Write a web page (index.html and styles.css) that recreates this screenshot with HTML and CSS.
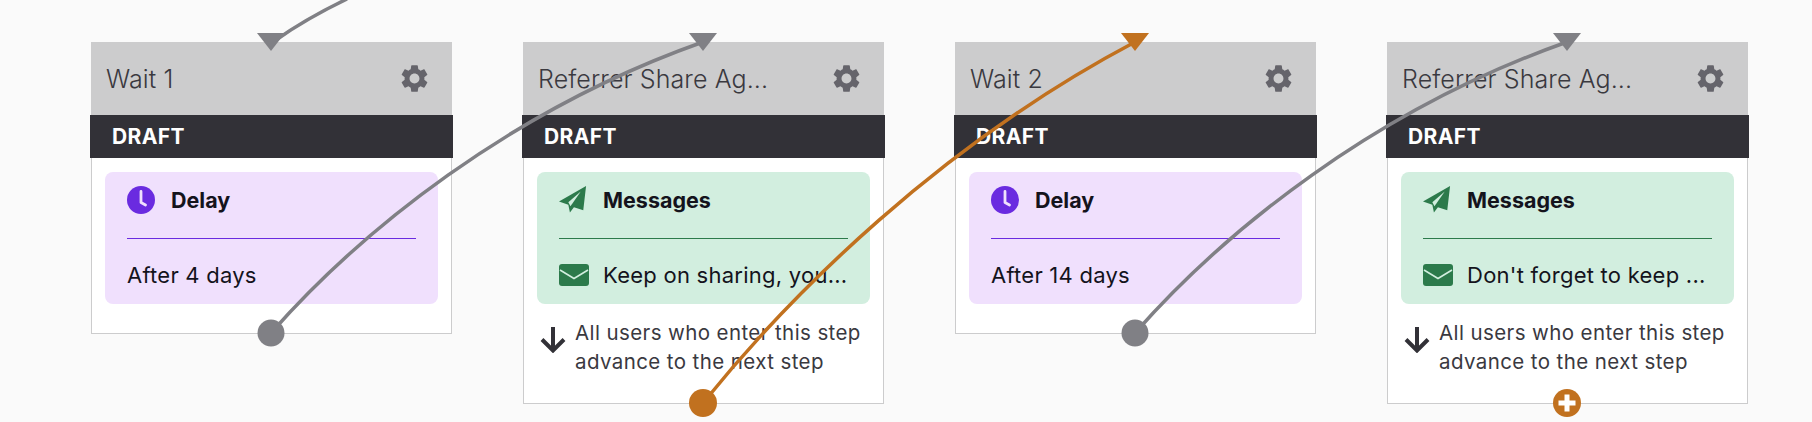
FILE: index.html
```html
<!DOCTYPE html>
<html lang="en">
<head>
  <meta charset="UTF-8">
  <meta name="viewport" content="width=device-width, initial-scale=1.0">
  <title>Journey Steps</title>
  <link rel="stylesheet" href="styles.css">
</head>
<body>

  <svg width="0" height="0" class="defs">
    <defs>
      <symbol id="gear" viewBox="0 0 24 24">
        <path d="M19.14 12.94c.04-.3.06-.61.06-.94 0-.32-.02-.64-.07-.94l2.03-1.58c.18-.14.23-.41.12-.61l-1.92-3.32c-.12-.22-.37-.29-.59-.22l-2.39.96c-.5-.38-1.03-.7-1.62-.94l-.36-2.54c-.04-.24-.24-.41-.48-.41h-3.84c-.24 0-.43.17-.47.41l-.36 2.54c-.59.24-1.13.57-1.62.94l-2.39-.96c-.22-.08-.47 0-.59.22L2.74 8.87c-.12.21-.08.47.12.61l2.03 1.58c-.05.3-.09.63-.09.94s.02.64.07.94l-2.03 1.58c-.18.14-.23.41-.12.61l1.92 3.32c.12.22.37.29.59.22l2.39-.96c.5.38 1.03.7 1.62.94l.36 2.54c.05.24.24.41.48.41h3.84c.24 0 .44-.17.47-.41l.36-2.54c.59-.24 1.13-.56 1.62-.94l2.39.96c.22.08.47 0 .59-.22l1.92-3.32c.12-.22.07-.47-.12-.61l-2.01-1.58zM12 15.6c-1.98 0-3.6-1.62-3.6-3.6s1.62-3.6 3.6-3.6 3.6 1.62 3.6 3.6-1.62 3.6-3.6 3.6z"/>
      </symbol>
      <symbol id="clock" viewBox="0 0 28 28">
        <circle cx="14" cy="14" r="14" fill="#6a2be0"/>
        <path d="M14 5.500V16.500L18.500 19" fill="none" stroke="#f0e0fd" stroke-width="2.800" stroke-linecap="round" stroke-linejoin="round"/>
      </symbol>
      <symbol id="plane" viewBox="0 0 30 30">
        <path d="M29 0 0 16.700 10 20 11.700 28.300 16 22.700 26 26Z" fill="#2c7a4b"/>
        <path d="M10 17.300 23.300 6 12.300 21.700Z" fill="#d2eedf"/>
      </symbol>
      <symbol id="mail" viewBox="0 0 30 22">
        <rect width="30" height="22" rx="3" fill="#2c7a4b"/>
        <path d="M1 6 L15 14.500 L29 6" fill="none" stroke="#d2eedf" stroke-width="1.600"/>
      </symbol>
      <symbol id="arrow" viewBox="0 0 26 26">
        <path d="M13 0v23M2 12.500 13 23.500 24 12.500" fill="none" stroke="#323137" stroke-width="4"/>
      </symbol>
    </defs>
  </svg>

  <div class="canvas">

    <div class="step">
      <div class="step-head">
        <span class="step-name">Wait 1</span>
        <svg class="gear"><use href="#gear"/></svg>
      </div>
      <div class="step-status">DRAFT</div>
      <div class="step-body">
        <div class="action action-delay">
          <div class="action-head">
            <svg class="icon"><use href="#clock"/></svg>
            <b>Delay</b>
          </div>
          <div class="action-row">
            <span>After 4 days</span>
          </div>
        </div>
      </div>
    </div>

    <div class="step">
      <div class="step-head">
        <span class="step-name">Referrer Share Ag...</span>
        <svg class="gear"><use href="#gear"/></svg>
      </div>
      <div class="step-status">DRAFT</div>
      <div class="step-body">
        <div class="action action-msg">
          <div class="action-head">
            <svg class="icon"><use href="#plane"/></svg>
            <b>Messages</b>
          </div>
          <div class="action-row">
            <svg class="icon icon-mail"><use href="#mail"/></svg>
            <span>Keep on sharing, you...</span>
          </div>
        </div>
        <div class="advance">
          <svg class="advance-icon"><use href="#arrow"/></svg>
          <span>All users who enter this step advance to the next step</span>
        </div>
      </div>
    </div>

    <div class="step">
      <div class="step-head">
        <span class="step-name">Wait 2</span>
        <svg class="gear"><use href="#gear"/></svg>
      </div>
      <div class="step-status">DRAFT</div>
      <div class="step-body">
        <div class="action action-delay">
          <div class="action-head">
            <svg class="icon"><use href="#clock"/></svg>
            <b>Delay</b>
          </div>
          <div class="action-row">
            <span>After 14 days</span>
          </div>
        </div>
      </div>
    </div>

    <div class="step">
      <div class="step-head">
        <span class="step-name">Referrer Share Ag...</span>
        <svg class="gear"><use href="#gear"/></svg>
      </div>
      <div class="step-status">DRAFT</div>
      <div class="step-body">
        <div class="action action-msg">
          <div class="action-head">
            <svg class="icon"><use href="#plane"/></svg>
            <b>Messages</b>
          </div>
          <div class="action-row">
            <svg class="icon icon-mail"><use href="#mail"/></svg>
            <span>Don't forget to keep ...</span>
          </div>
        </div>
        <div class="advance">
          <svg class="advance-icon"><use href="#arrow"/></svg>
          <span>All users who enter this step advance to the next step</span>
        </div>
      </div>
    </div>

    <!-- conectores entre pasos, van encima de las tarjetas -->
    <svg class="links" width="1812" height="422" viewBox="0 0 1812 422">
      <g class="link-grey">
        <path class="wire" d="M347 -1C322 11 300 23 276 40"/>
        <path class="tip" d="M257 33H285L271 51Z"/>
        <path class="wire" d="M271 333C360 232 510 110 703 42"/>
        <path class="tip" d="M689 33H717L703 51Z"/>
        <circle cx="271" cy="333" r="13.500"/>
        <path class="wire" d="M1135 333C1224 232 1374 110 1567 42"/>
        <path class="tip" d="M1553 33H1581L1567 51Z"/>
        <circle cx="1135" cy="333" r="13.500"/>
      </g>
      <g class="link-orange">
        <path class="wire" d="M703 403C790 295 940 145 1135 42"/>
        <path class="tip" d="M1121 33H1149L1135 51Z"/>
        <circle cx="703" cy="403" r="14"/>
        <circle cx="1567" cy="403" r="14"/>
        <path class="plus" d="M1567 394.500V411.500M1558.500 403H1575.500"/>
      </g>
    </svg>

  </div>

</body>
</html>
```

FILE: styles.css
```css
html, body {
  margin: 0;
  padding: 0;
  height: 100%;
  overflow: hidden;
}

body {
  background-color: #fafafa;
  font-family: 'Inter', sans-serif;
  color: #14131c;
}

.defs {
  position: absolute;
}

.canvas {
  position: relative;
  display: flex;
  align-items: flex-start;
  gap: 71px;
  padding: 42px 0 0 91px;
  height: 100%;
  box-sizing: border-box;
}

.step {
  width: 361px;
  flex: none;
}

.step-head {
  height: 73px;
  background-color: #cccccd;
  display: flex;
  align-items: center;
  justify-content: space-between;
  padding: 0 21px 0 15px;
}

.step-name {
  font-size: 25px;
  font-weight: 300;
  letter-spacing: 0.1px;
  color: #3a393f;
}

.gear {
  width: 33px;
  height: 33px;
  fill: #65646b;
}

.step-status {
  height: 43px;
  margin: 0 -1px;
  padding-left: 22px;
  background-color: #323137;
  color: #fff;
  font-size: 21px;
  font-weight: 700;
  letter-spacing: 0.4px;
  line-height: 43px;
}

.step-body {
  background-color: #fff;
  border: 1px solid #cccccd;
  border-top: none;
  padding: 14px 13px 0;
}

.action {
  border-radius: 8px;
  padding: 0 22px;
  height: 132px;
  box-sizing: border-box;
}

.action-delay {
  background-color: #f0e0fd;
  margin-bottom: 29px;
}

.action-msg {
  background-color: #d2eedf;
}

.action-head {
  height: 67px;
  padding-bottom: 10px;
  box-sizing: border-box;
  display: flex;
  align-items: center;
  gap: 16px;
  font-size: 21.500px;
}

.action-head b {
  font-weight: 700;
}

.action-delay .action-head {
  border-bottom: 1px solid #6a2be0;
}

.action-msg .action-head {
  border-bottom: 1px solid #2c7a4b;
}

.action-row {
  height: 65px;
  padding-top: 7px;
  box-sizing: border-box;
  display: flex;
  align-items: center;
  gap: 16px;
  font-size: 22px;
  letter-spacing: 0.25px;
  white-space: nowrap;
}

.icon {
  width: 28px;
  height: 28px;
  flex: none;
}

.icon-mail {
  width: 30px;
  height: 22px;
  margin-right: -2px;
}

.advance {
  display: flex;
  align-items: flex-start;
  gap: 9px;
  margin: 14px 0 27px;
  padding-left: 3px;
  font-size: 20.500px;
  letter-spacing: 0.4px;
  line-height: 29px;
  color: #3a393f;
}

.advance-icon {
  width: 26px;
  height: 26px;
  flex: none;
  margin-top: 9px;
}

.links {
  position: absolute;
  top: 0;
  left: 0;
  pointer-events: none;
}

.wire {
  fill: none;
  stroke-width: 3.500px;
}

.plus {
  fill: none;
  stroke: #fff;
  stroke-width: 5px;
}

.link-grey .wire {
  stroke: #808085;
}

.link-grey .tip,
.link-grey circle {
  fill: #808085;
}

.link-orange .wire {
  stroke: #c1711f;
}

.link-orange .tip,
.link-orange circle {
  fill: #c1711f;
}
```
